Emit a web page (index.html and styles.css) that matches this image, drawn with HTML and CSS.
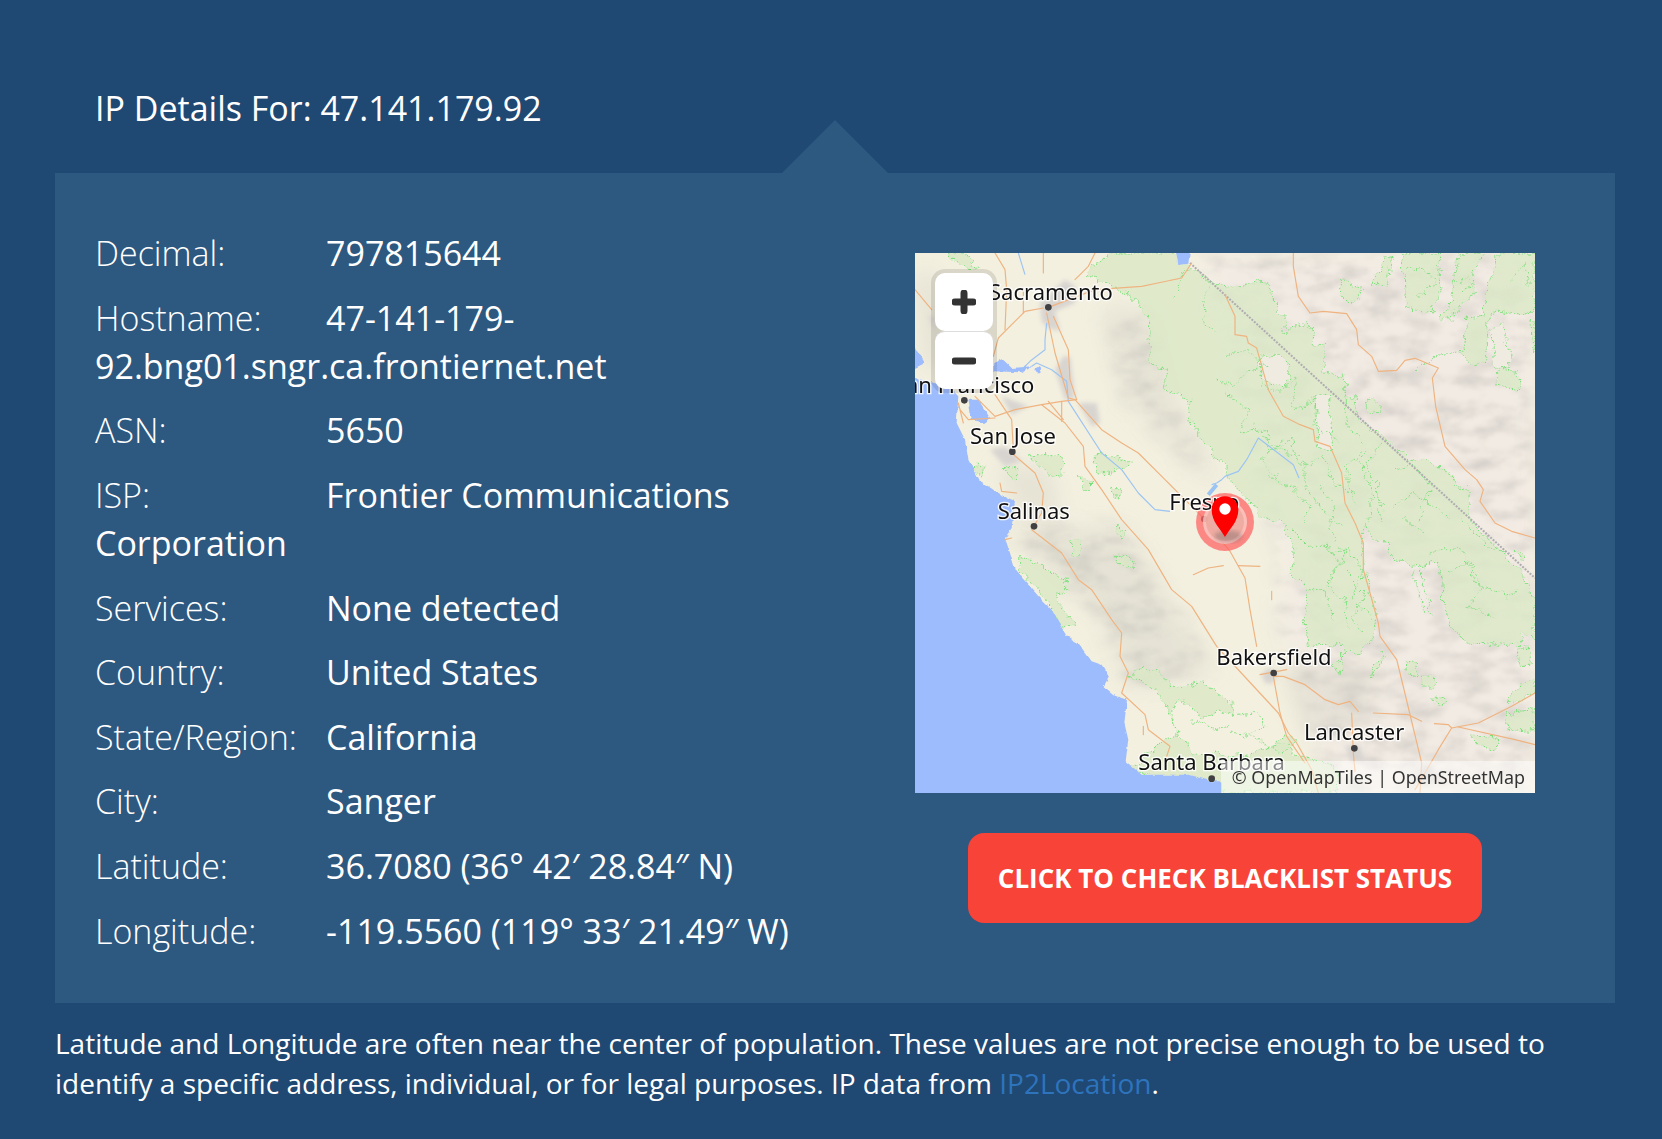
FILE: index.html
```html
<!DOCTYPE html>
<html lang="en">
<head>
<meta charset="utf-8">
<title>IP Details</title>
<link rel="stylesheet" href="styles.css">
</head>
<body>
<main class="page">
  <h2 class="title">IP Details For: 47.141.179.92</h2>
  <section class="panel">
    <div class="details">
      <p class="row"><span class="label">Decimal:</span>797815644</p>
      <p class="row"><span class="label">Hostname:</span>47-141-179-92.bng01.sngr.ca.frontiernet.net</p>
      <p class="row"><span class="label">ASN:</span>5650</p>
      <p class="row"><span class="label">ISP:</span>Frontier Communications Corporation</p>
      <p class="row"><span class="label">Services:</span>None detected</p>
      <p class="row"><span class="label">Country:</span>United States</p>
      <p class="row"><span class="label">State/Region:</span>California</p>
      <p class="row"><span class="label">City:</span>Sanger</p>
      <p class="row"><span class="label">Latitude:</span>36.7080 (36° 42′ 28.84″ N)</p>
      <p class="row"><span class="label">Longitude:</span>-119.5560 (119° 33′ 21.49″ W)</p>
    </div>
    <div class="side">
      <div class="map">
        <svg class="map-art" viewBox="0 0 1860 1620" xmlns="http://www.w3.org/2000/svg">
          <defs>
            <filter id="hills" filterUnits="userSpaceOnUse" x="0" y="0" width="1860" height="1620">
              <feGaussianBlur in="SourceAlpha" stdDeviation="28" result="m"/>
              <feTurbulence type="fractalNoise" baseFrequency="0.011 0.02" numOctaves="5" seed="11"/>
              <feColorMatrix type="matrix" values="0 0 0 0 0.47  0 0 0 0 0.45  0 0 0 0 0.43  0.95 0 0 0 -0.38"/>
              <feGaussianBlur stdDeviation="2.5"/>
              <feComposite in2="m" operator="in"/>
            </filter>
            <filter id="soft"><feGaussianBlur stdDeviation="30"/></filter>
            <filter id="soft2"><feGaussianBlur stdDeviation="7"/></filter>
            <filter id="rough" filterUnits="userSpaceOnUse" x="0" y="0" width="1860" height="1620">
              <feTurbulence type="fractalNoise" baseFrequency="0.035" numOctaves="3" seed="4" result="w"/>
              <feDisplacementMap in="SourceGraphic" in2="w" scale="34" xChannelSelector="R" yChannelSelector="G"/>
            </filter>
            <filter id="coast" filterUnits="userSpaceOnUse" x="-20" y="0" width="1900" height="1620">
              <feTurbulence type="fractalNoise" baseFrequency="0.05" numOctaves="2" seed="9" result="w"/>
              <feDisplacementMap in="SourceGraphic" in2="w" scale="12" xChannelSelector="R" yChannelSelector="G"/>
            </filter>
          </defs>
          <rect class="land" width="1860" height="1620"/>
          <g filter="url(#soft)">
            <path class="rock" d="M860 0H1860V1620H1240L1180 1340L1160 1240L1100 1130L1120 900L1020 700L960 400L880 150Z"/>
            <path class="range" d="M280 830L620 820L800 1100L900 1250L720 1300L640 1300L560 1100L400 960Z"/>
            <path class="range" d="M0 60L60 60L140 330L30 350Z"/>
            <path class="range" d="M560 170L720 170L780 430L900 680L990 740L830 640L620 420Z"/>
            <path class="range" d="M240 640L400 640L440 780L320 790Z"/>
            <path class="range" d="M1100 1230L1400 1230L1340 1440L1170 1440Z"/>
          </g>
          <g filter="url(#hills)">
            <path d="M860 0H1860V1620H1240L1180 1340L1140 1240L1090 1130L1100 900L1020 700L960 400L880 150Z"/>
            <path d="M280 830L620 820L800 1100L880 1230L720 1300L640 1300L560 1100L400 960Z"/>
            <path d="M600 200H720L760 430L880 660L830 640L620 420Z"/>
          </g>
          <g class="urban" filter="url(#soft2)">
            <path d="M375 150L450 80L480 100L480 150L420 175L435 235L400 225L380 205Z"/>
            <path d="M445 310L465 310L480 435L450 440L420 350Z"/>
            <path d="M490 450L545 450L555 510L530 520Z"/>
            <path d="M225 590L270 580L320 625L270 640Z"/>
            <path d="M260 430L340 460L290 485Z"/>
            <path d="M40 190L60 190L60 235Z"/>
            <path d="M1040 1265L1060 1245L1095 1260L1070 1292L1050 1290Z"/>
            <path d="M1290 1480L1335 1475L1348 1525L1310 1525Z"/>
            <path d="M1520 1535H1555V1590H1510Z"/>
          </g>
          <g filter="url(#rough)">
            <g class="forest">
              <path d="M520 65L560 15L600 0H780L830 40L900 90L970 110L1030 80L1060 90L1080 160L1110 190L1110 240L1175 205L1195 235L1190 275L1227 280L1227 360L1288 368L1292 430L1320 435L1325 490L1370 530L1430 575L1490 620L1530 615L1620 670L1610 700L1662 705L1662 790L1675 810L1775 915L1810 940L1860 1050L1860 1160L1820 1140L1815 1175L1650 1170L1600 1110L1590 1050L1570 930L1490 940L1450 920L1410 895L1420 870L1370 860L1350 810L1340 870L1350 960L1385 1090L1380 1150L1330 1205L1300 1190L1250 1240L1280 1255L1280 1175L1180 1180L1170 1100L1180 1015L1125 960L1140 880L1100 810L1040 790L1000 740L930 670L930 640L830 520L820 440L745 400L760 350L705 330L700 200L650 130Z"/>
              <path d="M1375 60L1405 55L1410 10L1430 5L1420 95L1375 95Z"/>
              <path d="M1460 0H1570L1575 120L1550 180L1470 165Z"/>
              <path d="M1270 80L1285 75L1310 100L1340 105L1335 130L1310 155L1275 120Z"/>
              <path d="M1630 0H1705L1675 70L1680 120L1640 165L1580 210L1575 185L1600 170L1620 70Z"/>
              <path d="M1700 190L1730 60L1750 0H1860V170L1810 185L1745 170L1720 185L1715 320L1670 340L1630 300L1650 270L1655 195Z"/>
              <path d="M1845 210L1860 205V300L1850 280Z"/>
              <path d="M1750 345L1790 350L1815 385L1810 405L1745 400Z"/>
              <path d="M1350 450L1375 435L1395 455L1395 480L1355 475Z"/>
              <path d="M340 605L440 605L445 670L400 665Z"/>
              <path d="M545 605L590 605L650 630L610 655L550 660L540 630Z"/>
              <path d="M490 670L530 680L525 705L505 715Z"/>
              <path d="M590 700L620 710L615 735L595 730Z"/>
              <path d="M180 640L220 640L195 670Z"/>
              <path d="M270 640L305 650L305 675L280 670Z"/>
              <path d="M105 0H140L190 45L130 40Z"/>
              <path d="M310 910L380 935L410 965L455 975L455 1015L420 1020L435 1060L480 1115L455 1125L410 1080L400 1045L355 990L320 960Z"/>
              <path d="M470 860L495 860L508 880L490 910L470 895Z"/>
              <path d="M600 910L630 910L660 930L655 950L605 930Z"/>
              <path d="M605 810L630 840L620 855L605 840Z"/>
              <path d="M640 1270L690 1240L745 1265L765 1300L815 1300L860 1285L905 1320L950 1350L960 1395L910 1370L860 1400L840 1370L790 1340L770 1370L790 1450L830 1500L1000 1510L1100 1470L1140 1500L1270 1550L1260 1620H900L680 1565L640 1545L790 1440L750 1350L710 1300Z"/>
              <path d="M1375 1250L1405 1200L1410 1210L1390 1250L1360 1280Z"/>
              <path d="M1470 1230L1500 1220L1510 1265L1475 1260Z"/>
              <path d="M1522 1270H1560L1555 1305H1525Z"/>
              <path d="M1555 1335L1585 1330L1590 1355L1565 1360Z"/>
              <path d="M1780 1330L1860 1265V1320L1790 1355Z"/>
              <path d="M1770 1380L1860 1370V1430L1780 1435Z"/>
              <path d="M1675 1445L1755 1460L1740 1495L1680 1470Z"/>
              <path d="M1805 1185L1840 1185L1850 1240L1815 1240Z"/>
              <path d="M1800 895L1830 910L1820 930Z"/>
              <path d="M1075 1490L1110 1440L1150 1470L1100 1500Z"/>
            </g>
            <path class="bare" d="M1030 320L1080 300L1130 340L1110 400L1040 380Z"/>
            <path class="bare" d="M1200 430L1240 420L1250 590L1210 580Z"/>
            <path class="bare" d="M1730 230L1760 210L1790 340L1740 350Z"/>
            <g class="dash">
              <path d="M780 130L800 60L840 40L880 90L860 190L900 240"/>
              <path d="M930 310L1000 290L1040 330L1040 400L1100 420L1140 370L1130 470L1200 450L1200 520L1270 560"/>
              <path d="M930 420L1000 470L980 540L1060 530L1060 600L1130 560L1150 640L1230 610L1260 700L1330 720"/>
              <path d="M1010 520L1090 590L1170 620L1170 700L1230 780L1270 810"/>
              <path d="M1060 670L1130 700L1190 760L1160 810"/>
              <path d="M1290 400L1300 520L1360 590L1330 620L1370 710L1365 810"/>
              <path d="M1400 570L1350 640L1390 700L1400 810"/>
              <path d="M1440 650L1500 640L1550 700L1510 810"/>
              <path d="M1130 830L1180 880L1240 880L1270 930L1240 1000L1290 1040L1300 1120"/>
              <path d="M1250 900L1300 890L1345 960L1310 1040L1370 1090"/>
              <path d="M1490 950L1530 1085M1510 940L1550 1085"/>
              <path d="M1550 900L1640 880L1680 990L1780 1030L1820 1000"/>
              <path d="M1640 800L1720 880L1790 910"/>
              <path d="M1500 350L1560 310L1640 290M1480 50L1520 40L1560 90L1510 130"/>
              <path d="M1780 90L1830 30L1850 120"/>
              <path d="M1620 90L1660 70L1675 100L1640 110"/>
              <path d="M970 1390L1030 1380L1050 1420L1000 1450L950 1440"/>
              <path d="M1060 340L1000 350L960 400L900 380M1100 560L1040 620L1090 680"/>
              <path d="M1210 700L1260 760L1240 820L1290 900L1260 960M1340 600L1290 640L1320 760"/>
              <path d="M1440 760L1490 720L1560 760L1610 800M1470 800L1530 840"/>
              <path d="M1160 1000L1230 1020L1260 1110M1290 960L1350 1020L1310 1100L1350 1140"/>
              <path d="M1600 960L1660 920L1700 1000L1660 1060L1740 1100"/>
              <path d="M830 1400L900 1430L950 1410M1000 1440L1060 1480"/>
            </g>
          </g>
          <g filter="url(#coast)">
            <path class="ocean" d="M-20 285H0L30 330L0 345V375L100 400L130 430L125 510L150 560L160 620L190 680L250 720L300 745L290 825L270 855L285 900L300 950L380 1040L410 1070L455 1150L490 1170L530 1225L560 1235L582 1272L566 1300L600 1328L636 1340L628 1410L640 1460L632 1525L680 1565L820 1565L890 1585L920 1585V1640H-20Z"/>
            <path class="water" d="M160 440L190 440L225 495L205 510L170 500Z"/>
            <path class="water" d="M235 330L262 318L290 345L350 340L320 358L235 355Z"/>
            <path class="water" d="M782 -10H825L820 32L790 36Z"/>
            <circle class="water" cx="370" cy="350" r="8"/>
          </g>
          <g class="rivers">
            <path d="M310 0L330 65"/>
            <path d="M395 210L390 260L390 290L345 325L320 350"/>
            <path d="M350 340L365 330L410 350L455 385L460 445L560 600L620 650L670 720L720 770L765 775"/>
            <path d="M890 695L905 690L920 680L930 670L970 655L995 620L1030 555L1135 635L1152 675"/>
            <path class="wide" d="M905 695L880 725"/>
          </g>
          <path class="border" d="M825 30L1860 975"/>
          <g class="roads">
            <path d="M385 165L330 175L290 215L250 255L235 310"/>
            <path d="M400 163L540 110L680 100L800 75L830 30"/>
            <path d="M395 180L420 300L460 435L480 440L560 530L620 570L670 600L750 680L800 730L860 790L945 895L990 975L1005 1070L1025 1180"/>
            <path d="M415 190L460 290L465 380L485 440"/>
            <path d="M485 440L440 445L380 455L300 470L240 490L180 430"/>
            <path d="M380 455L450 510L505 580L510 640L560 710L620 800L700 890L770 1010L830 1060L905 1180L965 1245L1090 1380L1120 1440L1145 1470L1190 1550L1210 1620"/>
            <path d="M240 0L270 50L275 110L270 230M385 0V60M325 110V180M0 110L50 170M540 0L520 40L480 80"/>
            <path d="M240 425L290 500L295 590M135 470L160 500L240 495M130 450L145 510"/>
            <path d="M290 600L360 660L385 720L380 780L350 830L440 900L490 980L530 1010L590 1100L620 1140L615 1210L640 1260L620 1320L690 1385L700 1430L765 1480L755 1510"/>
            <path d="M255 690L260 715L305 720M400 445L445 500M440 445V505M685 1420V1445M290 855L270 860"/>
            <path d="M835 965L880 945L925 938M970 938L1035 940M1070 1015V1040"/>
            <path d="M1135 0V40L1150 130L1185 180L1225 175L1295 182L1325 230L1330 275L1370 310L1390 355L1445 352L1470 322L1500 316L1570 345L1552 375L1562 460L1590 580L1650 650L1685 680L1705 710L1695 745L1740 810L1790 835L1860 855"/>
            <path d="M930 125L960 190V245L995 250L1000 270L1025 285L1060 410L1105 490L1155 515L1195 530L1200 565L1245 580L1280 660L1290 750L1320 810L1345 870L1345 950L1365 1020L1390 1110L1395 1150L1445 1220L1455 1260L1520 1530L1515 1620"/>
            <path d="M1075 1270L1105 1270L1170 1295L1230 1340L1270 1355L1305 1345L1330 1375"/>
            <path d="M1075 1270L1095 1380L1115 1450L1170 1530"/>
            <path d="M1035 1265L1115 1250M1310 1380L1315 1500L1320 1555"/>
            <path d="M1375 1380L1480 1385L1520 1405M1558 1412L1600 1415L1610 1425L1690 1410L1790 1360L1860 1320"/>
            <path d="M1610 1425L1570 1490L1530 1560L1500 1610M1630 1422L1800 1460L1860 1475"/>
          </g>
          <g class="places">
            <circle cx="400" cy="163" r="10"/><circle cx="148" cy="442" r="10"/><circle cx="292" cy="596" r="10"/>
            <circle cx="357" cy="820" r="10"/><circle cx="868" cy="798" r="10"/><circle cx="1076" cy="1260" r="10"/>
            <circle cx="1318" cy="1486" r="10"/><circle cx="890" cy="1577" r="10"/>
          </g>
          <circle class="pulse-outer" cx="930" cy="807" r="87"/>
          <circle class="pulse-gap" cx="930" cy="807" r="66"/>
          <circle class="pulse-inner" cx="930" cy="807" r="57"/>
          <ellipse class="pin-shadow" cx="940" cy="850" rx="42" ry="18"/>
          <g class="labels">
            <text x="222" y="140">Sacramento</text>
            <text x="358" y="420" text-anchor="end">San Francisco</text>
            <text x="165" y="572">San Jose</text>
            <text x="248" y="798">Salinas</text>
            <text x="763" y="772">Fresno</text>
            <text x="904" y="1237">Bakersfield</text>
            <text x="1167" y="1462">Lancaster</text>
            <text x="670" y="1552">Santa Barbara</text>
          </g>
          <path class="pin" d="M930 852C916 826 890 806 890 770C890 746 908 730 930 730C952 730 970 746 970 770C970 806 944 826 930 852Z"/>
          <circle class="pin-hole" cx="930" cy="768" r="17"/>
        </svg>
        <div class="zoom-control">
          <button class="zoom-btn" type="button" aria-label="Zoom in">
            <svg class="zoom-icon" viewBox="0 0 24 24"><path d="M3 12H21M12 3V21"/></svg>
          </button>
          <button class="zoom-btn zoom-btn-out" type="button" aria-label="Zoom out">
            <svg class="zoom-icon" viewBox="0 0 24 24"><path d="M3 12H21"/></svg>
          </button>
        </div>
        <div class="attribution">© OpenMapTiles | OpenStreetMap</div>
      </div>
      <a class="cta" href="#">CLICK TO CHECK BLACKLIST STATUS</a>
    </div>
  </section>
  <p class="note">Latitude and Longitude are often near the center of population. These values are not precise enough to be used to identify a specific address, individual, or for legal purposes. IP data from <a class="note-link" href="#">IP2Location</a>.</p>
</main>
</body>
</html>
```
FILE: styles.css
```css
* { box-sizing: border-box; }
html, body { margin: 0; padding: 0; }
body {
  background: #1f4872;
  color: #fff;
  font-family: "Open Sans", "Noto Sans", sans-serif;
  overflow: hidden;
}
.page { padding: 84px 47px 0 55px; height: 1139px; }
.title {
  margin: 0 0 41px 40px;
  font-size: 34px;
  font-weight: 400;
  line-height: 48px;
}
.panel {
  position: relative;
  display: flex;
  height: 830px;
  padding: 56px 80px 0 40px;
  background: #2d5880;
}
.panel::before {
  content: "";
  position: absolute;
  left: 727px;
  top: -53px;
  width: 0;
  height: 0;
  border-left: 53px solid transparent;
  border-right: 53px solid transparent;
  border-bottom: 53px solid #2d5880;
}
.details { width: 720px; flex: none; }
.row {
  margin: 0 0 16.65px;
  font-size: 34px;
  line-height: 48px;
}
.label { display: inline-block; width: 231px; font-weight: 300; }
.side {
  flex: none;
  width: 620px;
  margin-left: 100px;
  padding-top: 24px;
  display: flex;
  flex-direction: column;
  align-items: center;
}
.map {
  position: relative;
  width: 620px;
  height: 540px;
  overflow: hidden;
  background: #f3f0e0;
}
.map-art { display: block; width: 620px; height: 540px; }
.land { fill: #f3f0e0; }
.rock { fill: #f2ebe3; }
.range { fill: #dddbcf; opacity: .6; }
.urban path { fill: #d8d4d0; }
.forest path { fill: #dbe8c6; fill-opacity: .8; stroke: #78e078; stroke-width: 3; stroke-dasharray: 6 5; }
.bare { fill: #f0ebe0; stroke: #78e078; stroke-width: 3; stroke-dasharray: 6 5; }
.dash path { fill: none; stroke: #7fe07f; stroke-width: 3; stroke-dasharray: 6 5; }
.ocean, .water { fill: #9dbcfd; }
.rivers path { fill: none; stroke: #9cc4f2; stroke-width: 3.5; stroke-linejoin: round; }
.rivers .wide { stroke-width: 12; }
.border { fill: none; stroke: #aeacb0; stroke-width: 6; stroke-dasharray: 6 4; }
.roads path { fill: none; stroke: #efb380; stroke-width: 3.5; stroke-linejoin: round; stroke-linecap: round; }
.places circle { fill: #404042; }
.labels text {
  font-family: "Noto Sans", "Open Sans", sans-serif;
  font-size: 66px;
  fill: #111;
  stroke: rgba(255, 255, 255, .85);
  stroke-width: 8px;
  paint-order: stroke;
}
.pulse-outer { fill: #ff6060; fill-opacity: .72; }
.pulse-gap { fill: #fbd5cf; fill-opacity: .7; }
.pulse-inner { fill: #e69c92; fill-opacity: .55; }
.pin-shadow { fill: #555; fill-opacity: .32; filter: url(#soft2); }
.pin { fill: #f00; }
.pin-hole { fill: #fff; }
.zoom-control {
  position: absolute;
  left: 16px;
  top: 16px;
  width: 66px;
  padding: 4px;
  border-radius: 14px;
  background: rgba(0, 0, 0, .1);
}
.zoom-btn {
  display: flex;
  align-items: center;
  justify-content: center;
  width: 58px;
  height: 58px;
  padding: 0;
  border: 0;
  border-radius: 10px;
  background: #fff;
}
.zoom-btn-out { border-top: 1px solid #ddd; }
.zoom-icon { width: 24px; height: 24px; fill: none; stroke: #333; stroke-width: 7; stroke-linecap: round; }
.attribution {
  position: absolute;
  right: 0;
  bottom: 0;
  width: 314px;
  height: 32px;
  padding: 0 10px 0 0;
  background: rgba(255, 255, 255, .5);
  color: #333;
  font-family: "Noto Sans", "Open Sans", sans-serif;
  font-size: 17.9px;
  line-height: 32px;
  text-align: right;
  white-space: nowrap;
}
.cta {
  display: flex;
  align-items: center;
  justify-content: center;
  width: 514px;
  height: 90px;
  margin-top: 40px;
  border-radius: 16px;
  background: #f84338;
  color: #fff;
  font-size: 26px;
  font-weight: 700;
  text-decoration: none;
}
.note {
  margin: 20px 0 0;
  font-size: 28px;
  line-height: 40px;
}
.note-link { color: #2e74bd; text-decoration: none; }
```
